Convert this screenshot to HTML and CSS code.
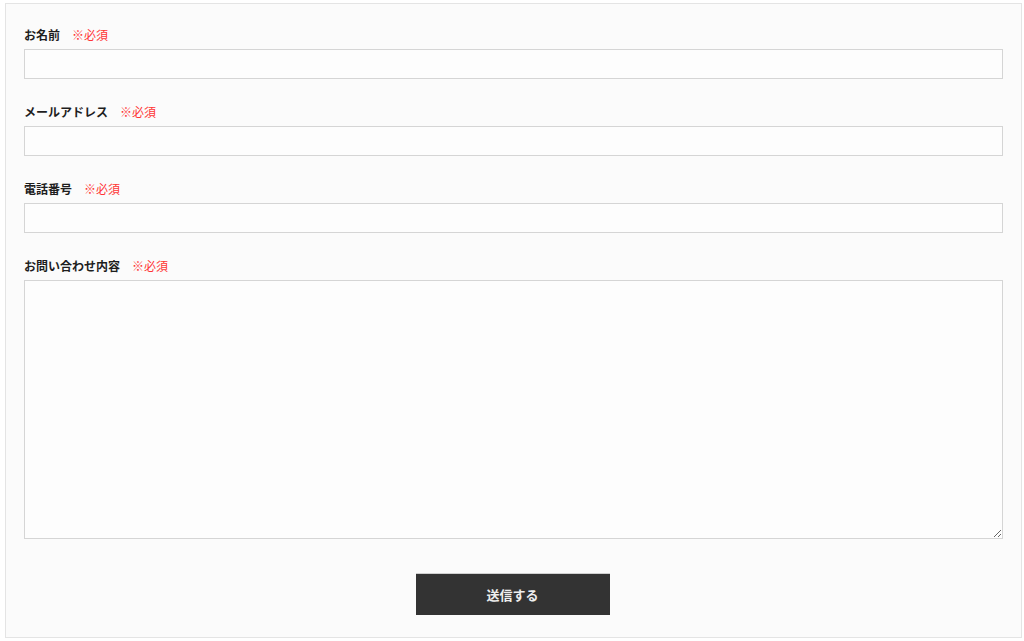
FILE: index.html
```html
<!DOCTYPE html>
<html lang="ja">
<head>
    <meta charset="UTF-8">
    <meta name="viewport" content="width=device-width, initial-scale=1.0">
    <title>お問い合わせ</title>
    <link rel="stylesheet" href="styles.css">
</head>
<body>

<form class="contact-form">
    <div class="field">
        <label class="field-label">お名前<span class="required">※必須</span></label>
        <input type="text" class="field-input">
    </div>
    <div class="field">
        <label class="field-label">メールアドレス<span class="required">※必須</span></label>
        <input type="email" class="field-input">
    </div>
    <div class="field">
        <label class="field-label">電話番号<span class="required">※必須</span></label>
        <input type="tel" class="field-input">
    </div>
    <div class="field">
        <label class="field-label">お問い合わせ内容<span class="required">※必須</span></label>
        <textarea class="field-input field-textarea"></textarea>
    </div>
    <div class="submit-row">
        <button type="submit" class="submit-btn">送信する</button>
    </div>
</form>

</body>
</html>
```

FILE: styles.css
```css
body {
    font-family: 'Noto Sans CJK JP', 'Noto Sans', sans-serif;
    margin: 0;
    padding: 0;
    background-color: #ffffff;
    color: #222;
}
.contact-form {
    margin: 3px 2px 0 5px;
    padding: 22px 18px 21px;
    background: #fbfbfb;
    border: 1px solid #e4e4e4;
    height: 635px;
    box-sizing: border-box;
}
.field {
    margin-bottom: 24px;
}
.field-label {
    display: block;
    font-size: 12px;
    font-weight: bold;
    line-height: 18px;
    margin-bottom: 5px;
    color: #1e1e1e;
}
.required {
    font-weight: normal;
    color: #ff3535;
    margin-left: 12px;
}
.field-input {
    display: block;
    width: 100%;
    height: 30px;
    box-sizing: border-box;
    border: 1px solid #d5d5d5;
    background: #fdfdfd;
    margin: 0;
    font-family: inherit;
}
.field-textarea {
    height: 259px;
    resize: vertical;
}
.submit-row {
    text-align: center;
    margin-top: -24px;
    padding-top: 34px;
}
.submit-row .submit-btn {
    margin-right: 2px;
}
.submit-btn {
    width: 194px;
    height: 42px;
    background: #333333;
    color: #eeeeee;
    border: none;
    border-top: 1px solid #d0d0d0;
    font-family: inherit;
    font-size: 13px;
    font-weight: bold;
    cursor: pointer;
}
```
